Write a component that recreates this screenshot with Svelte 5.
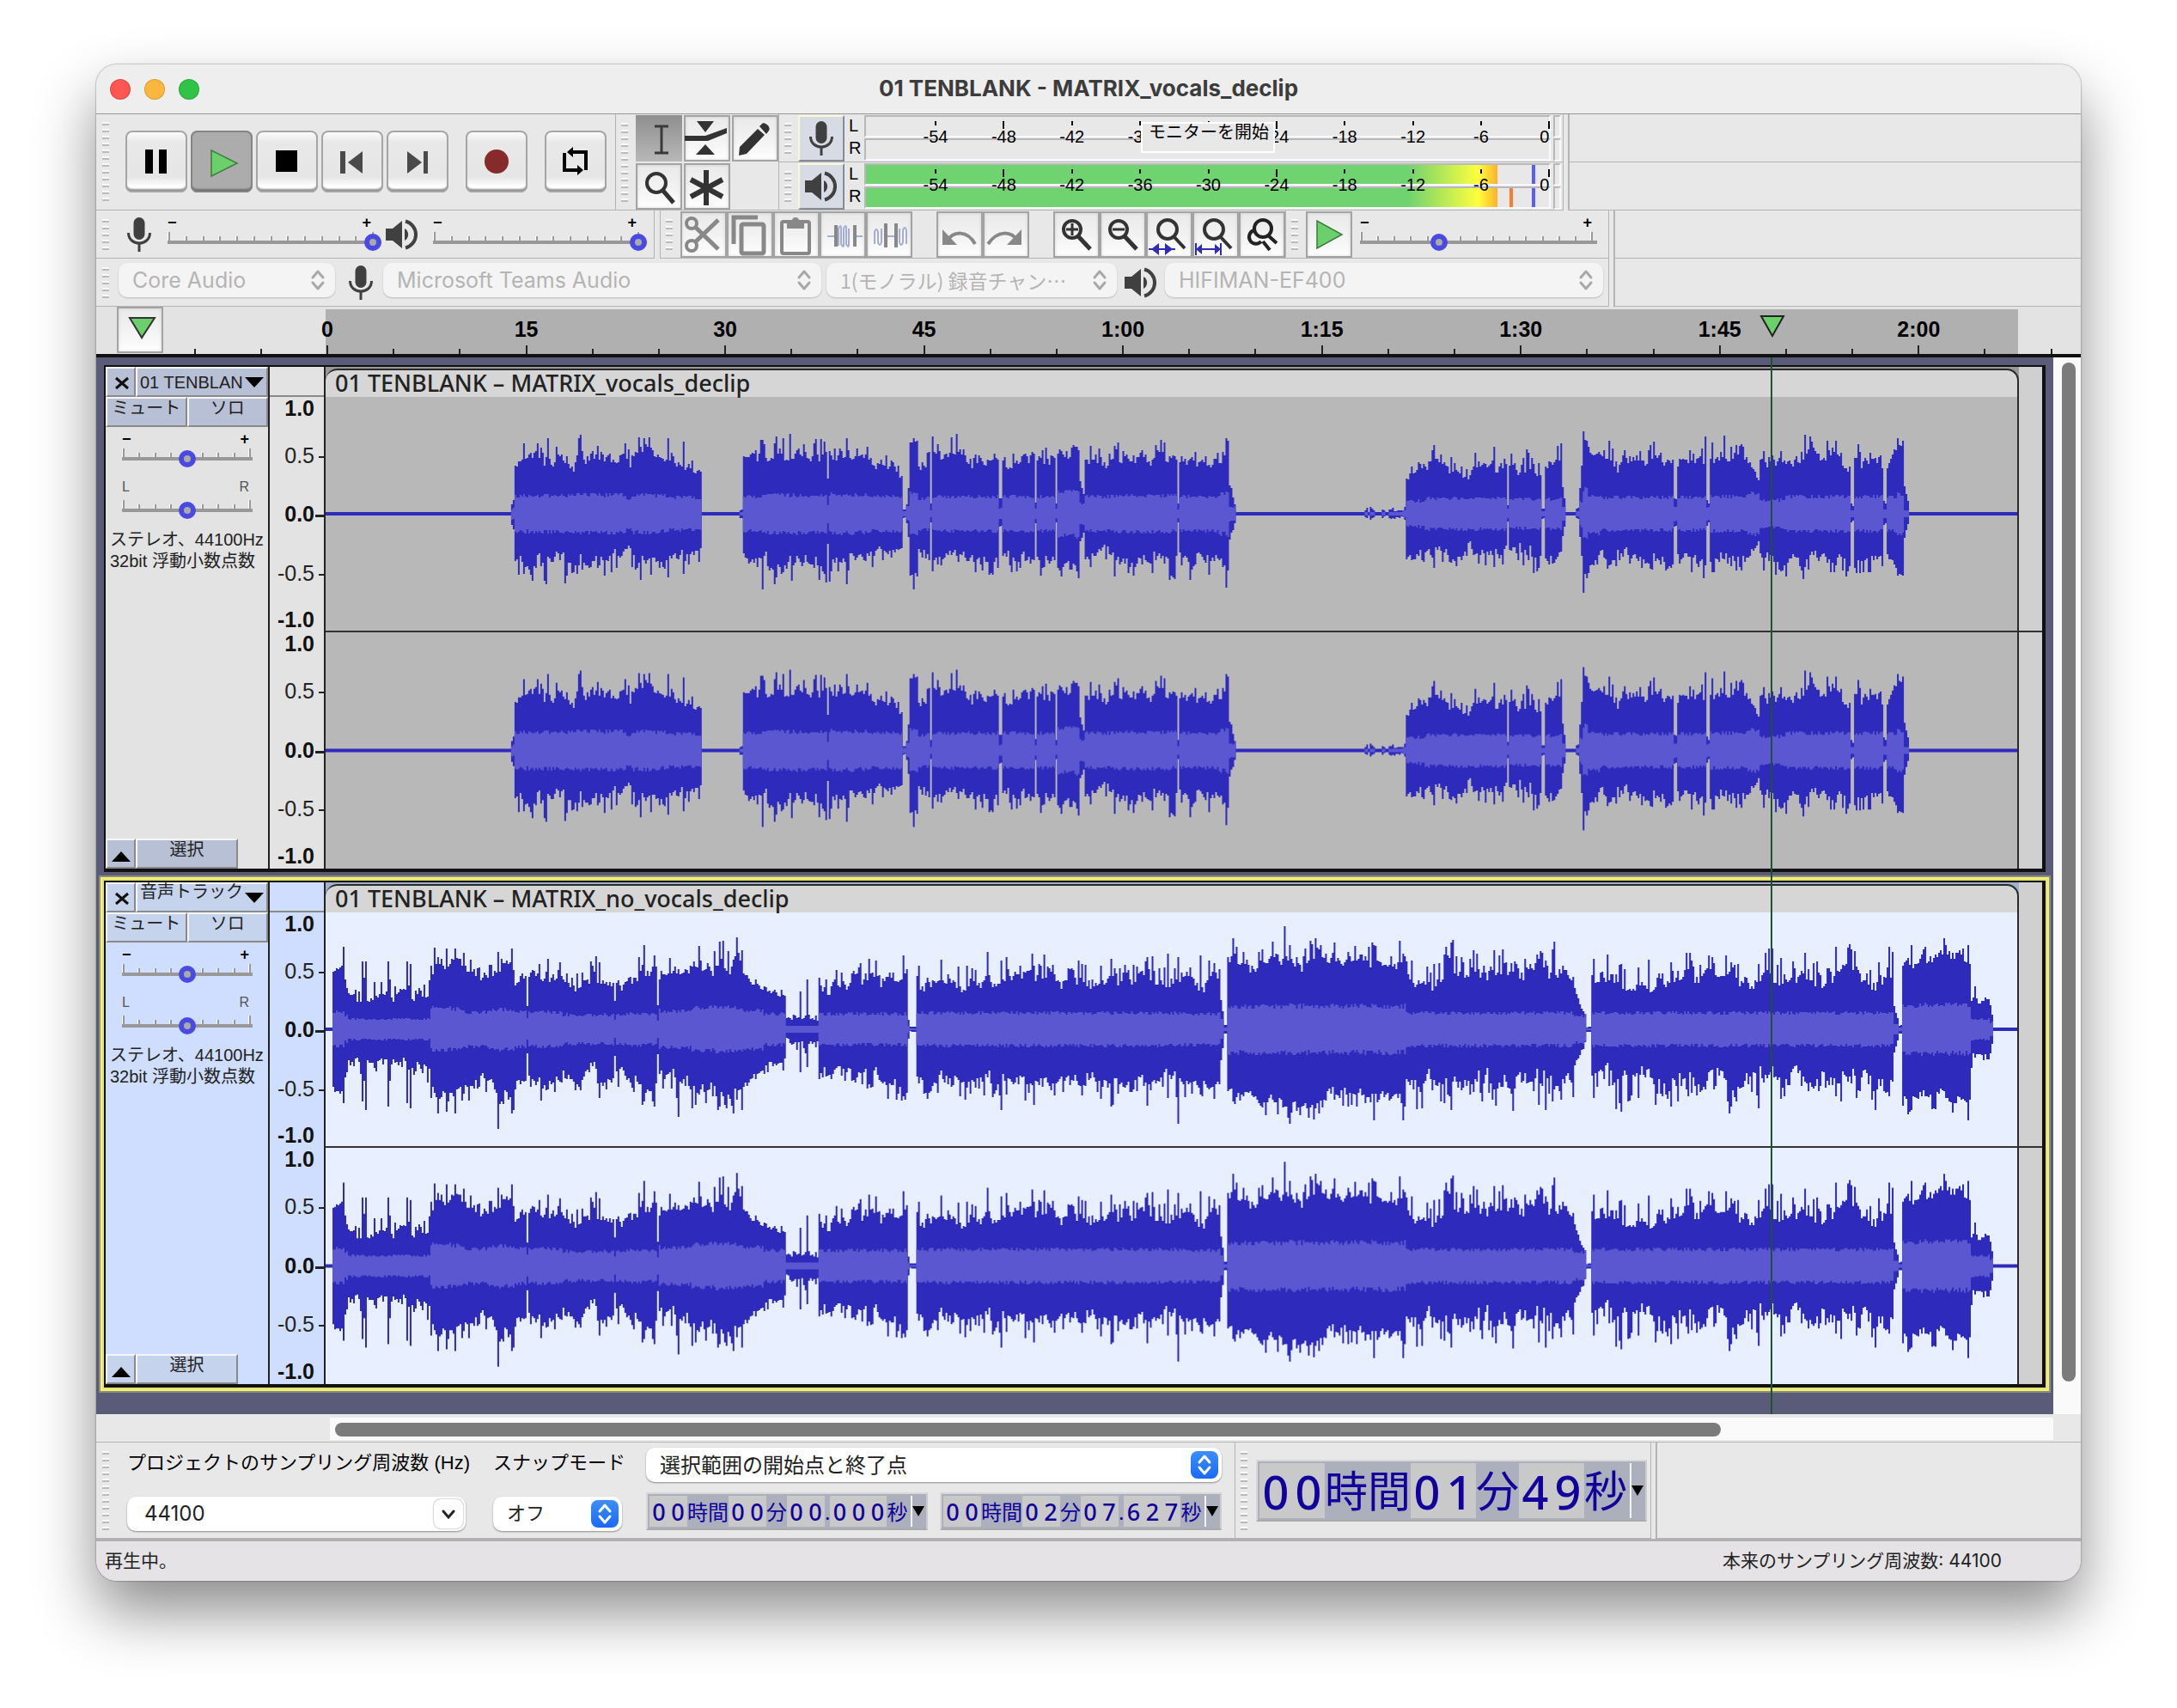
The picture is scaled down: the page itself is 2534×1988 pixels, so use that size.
<script lang="ts">
	type Segment = [from: number, to: number, start: number, end: number, jitter: number, rms: number];
	type Spike = [x: number, up: number, down: number];

	const DURATION = 127.627;
	const CLIP_WIDTH = 1970;
	const HALF = 136;
	const STEP = 2;

	const playhead = 108.9;

	const vocals: Segment[] = [
		[215, 219, 8, 20, 4, 6],
		[219, 240, 56, 68, 22, 21],
		[240, 290, 60, 62, 28, 21],
		[290, 350, 66, 62, 26, 22],
		[350, 356, 56, 48, 20, 18],
		[356, 384, 64, 72, 22, 22],
		[384, 400, 70, 58, 20, 21],
		[400, 437, 58, 50, 18, 19],
		[481, 485, 4, 6, 1, 2],
		[485, 510, 60, 68, 22, 20],
		[510, 584, 66, 68, 28, 22],
		[584, 586, 40, 32, 4, 10],
		[586, 630, 68, 62, 22, 22],
		[630, 671, 60, 46, 18, 20],
		[671, 676, 6, 4, 1, 3],
		[676, 679, 12, 40, 4, 8],
		[679, 690, 84, 82, 6, 26],
		[690, 703, 44, 58, 18, 18],
		[703, 706, 12, 10, 1, 4],
		[706, 784, 60, 64, 24, 20],
		[784, 788, 18, 16, 1, 6],
		[788, 825, 60, 64, 22, 20],
		[825, 827, 14, 12, 1, 6],
		[827, 849, 62, 66, 20, 20],
		[849, 851, 12, 12, 1, 6],
		[851, 877, 68, 72, 16, 26],
		[877, 883, 40, 20, 4, 12],
		[883, 915, 60, 54, 22, 20],
		[915, 991, 60, 64, 26, 21],
		[991, 993, 12, 12, 1, 5],
		[993, 1040, 60, 60, 24, 20],
		[1040, 1052, 60, 76, 14, 24],
		[1052, 1060, 34, 4, 4, 8],
		[1209, 1213, 3, 7, 2, 2],
		[1216, 1221, 7, 3, 2, 2],
		[1229, 1234, 5, 3, 1, 2],
		[1238, 1254, 5, 3, 3, 2],
		[1254, 1258, 4, 12, 1, 4],
		[1258, 1280, 46, 54, 18, 15],
		[1280, 1375, 52, 52, 24, 18],
		[1375, 1377, 10, 10, 1, 5],
		[1377, 1416, 52, 52, 24, 17],
		[1416, 1420, 6, 6, 1, 3],
		[1420, 1439, 58, 52, 20, 17],
		[1439, 1444, 32, 8, 3, 8],
		[1456, 1460, 6, 8, 1, 3],
		[1460, 1463, 30, 70, 6, 14],
		[1463, 1470, 88, 84, 8, 28],
		[1470, 1484, 74, 60, 10, 22],
		[1484, 1570, 56, 64, 24, 19],
		[1570, 1573, 18, 16, 1, 8],
		[1573, 1608, 56, 66, 20, 19],
		[1608, 1611, 16, 10, 1, 8],
		[1611, 1655, 60, 62, 24, 20],
		[1655, 1669, 58, 34, 8, 24],
		[1669, 1700, 54, 60, 24, 16],
		[1700, 1776, 62, 60, 26, 20],
		[1776, 1779, 12, 8, 1, 4],
		[1779, 1813, 62, 52, 22, 20],
		[1813, 1818, 16, 10, 1, 5],
		[1818, 1830, 54, 76, 8, 20],
		[1830, 1838, 78, 82, 8, 24],
		[1838, 1844, 32, 3, 2, 4]
	];

	const vocalSpikes: Spike[] = [
		[230, 82, 70], [294, 88, 60], [366, 78, 77], [398, 88, 74], [416, 84, 70], [508, 86, 88],
		[532, 88, 68], [580, 84, 70], [606, 88, 82], [684, 88, 88], [1048, 88, 86],
		[1464, 96, 92], [1606, 90, 60], [1830, 88, 72]
	];

	const backing: Segment[] = [
		[7, 21, 68, 74, 8, 20],
		[21, 26, 60, 40, 8, 15],
		[26, 122, 36, 38, 18, 12],
		[122, 160, 68, 78, 24, 24],
		[160, 190, 66, 62, 24, 20],
		[190, 220, 64, 76, 24, 23],
		[220, 234, 54, 58, 18, 20],
		[234, 236, 26, 26, 2, 12],
		[236, 275, 58, 58, 26, 20],
		[275, 336, 48, 54, 26, 17],
		[336, 338, 30, 30, 4, 10],
		[338, 386, 52, 60, 28, 18],
		[386, 388, 26, 30, 4, 10],
		[388, 425, 54, 68, 22, 21],
		[425, 486, 66, 76, 28, 25],
		[486, 510, 60, 44, 10, 22],
		[510, 536, 44, 36, 12, 18],
		[536, 574, 12, 14, 12, 4],
		[574, 610, 52, 50, 24, 18],
		[610, 677, 52, 60, 26, 18],
		[677, 679, 14, 8, 1, 4],
		[679, 687, 2, 3, 1, 1],
		[687, 990, 56, 56, 30, 19],
		[990, 1041, 56, 56, 26, 18],
		[1041, 1045, 40, 16, 4, 12],
		[1045, 1049, 5, 5, 1, 2],
		[1049, 1075, 78, 80, 18, 27],
		[1075, 1258, 76, 78, 24, 27],
		[1258, 1454, 58, 60, 32, 19],
		[1454, 1467, 44, 12, 6, 16],
		[1467, 1474, 2, 3, 1, 1],
		[1474, 1640, 56, 56, 32, 19],
		[1640, 1826, 56, 58, 32, 19],
		[1826, 1831, 26, 10, 2, 6],
		[1831, 1836, 4, 5, 1, 2],
		[1836, 1916, 76, 82, 20, 28],
		[1916, 1938, 34, 34, 20, 12],
		[1938, 1941, 28, 10, 2, 8]
	];

	const backingSpikes: Spike[] = [
		[20, 96, 86], [42, 79, 84], [44, 60, 60], [46, 79, 94], [72, 79, 90], [74, 58, 60], [94, 79, 86], [98, 76, 92],
		[130, 84, 98], [140, 94, 96], [150, 94, 98], [200, 90, 116], [216, 94, 98], [258, 82, 70],
		[318, 78, 80], [370, 98, 84], [382, 86, 90], [410, 70, 102], [458, 102, 90], [484, 92, 94],
		[552, 44, 50], [560, 58, 44], [632, 82, 64], [672, 86, 78], [786, 80, 94], [824, 74, 88],
		[914, 82, 90], [980, 88, 80], [992, 84, 110], [1018, 86, 76], [1056, 106, 84], [1116, 120, 90],
		[1122, 98, 110], [1152, 106, 92], [1220, 98, 106], [1254, 88, 106], [1360, 92, 70], [1420, 80, 94],
		[1430, 102, 70], [1476, 82, 80], [1508, 76, 96], [1566, 78, 90], [1636, 78, 90], [1668, 76, 92],
		[1758, 96, 78], [1846, 98, 94], [1912, 98, 106]
	];

	function noise(seed: number) {
		let s = seed;
		return () => {
			s = (s * 1664525 + 1013904223) % 4294967296;
			return s / 4294967296;
		};
	}

	// Mirrored step outline, one step per sample column
	function outline(up: number[], down: number[]) {
		let d = `M0 ${HALF}`;
		up.forEach((v, i) => (d += `V${HALF - v}H${(i + 1) * STEP}`));
		for (let i = down.length - 1; i >= 0; i--) d += `V${HALF + down[i]}H${i * STEP}`;
		return d + 'Z';
	}

	function buildWave(segments: Segment[], spikes: Spike[], lower: number, seed: number) {
		const rand = noise(seed);
		const up: number[] = [];
		const down: number[] = [];
		const rmsUp: number[] = [];
		const rmsDown: number[] = [];
		let driftUp = 0;
		let driftDown = 0;

		for (let x = 0; x < CLIP_WIDTH; x += STEP) {
			const seg = segments.find((s) => x >= s[0] && x < s[1]);
			if (!seg) {
				up.push(2);
				down.push(2);
				rmsUp.push(0);
				rmsDown.push(0);
				continue;
			}
			const [from, to, start, end, jitter, rms] = seg;
			const base = start + ((end - start) * (x - from)) / (to - from);
			driftUp = driftUp * 0.7 + (rand() - 0.5) * 0.7;
			driftDown = driftDown * 0.7 + (rand() - 0.5) * 0.7;
			const u = base + jitter * (driftUp * 0.8 + rand() ** 4);
			const l = base * lower + jitter * (driftDown * 0.8 + rand() ** 4);
			up.push(Math.round(Math.max(u, 2)));
			down.push(Math.round(Math.max(l, 2)));
			rmsUp.push(Math.round(rms * (0.88 + rand() * 0.24)));
			rmsDown.push(Math.round(rms * (0.88 + rand() * 0.24)));
		}
		for (const [x, u, l] of spikes) {
			const i = Math.floor(x / STEP);
			up[i] = u;
			down[i] = l;
		}
		return { peak: outline(up, down), rms: outline(rmsUp, rmsDown) };
	}

	const tracks = [
		{
			menu: '01 TENBLAN',
			clip: '01 TENBLANK – MATRIX_vocals_declip',
			focused: false,
			wave: buildWave(vocals, vocalSpikes, 0.84, 7)
		},
		{
			menu: '音声トラック',
			clip: '01 TENBLANK – MATRIX_no_vocals_declip',
			focused: true,
			wave: buildWave(backing, backingSpikes, 1, 21)
		}
	];

	const amplitudes = [
		{ label: '1.0', top: 5, bold: true },
		{ label: '0.5', top: 25, bold: false },
		{ label: '0.0', top: 50, bold: true },
		{ label: '-0.5', top: 75, bold: false },
		{ label: '-1.0', top: 95, bold: true }
	];

	const seconds = Array.from({ length: 29 }, (_, i) => (i - 2) * 5);
	const pct = (t: number) => `${(t / DURATION) * 100}%`;

	function timeLabel(t: number) {
		if (t < 60) return `${t}`;
		return `${Math.floor(t / 60)}:${String(t % 60).padStart(2, '0')}`;
	}

	const decibels = [-54, -48, -42, -36, -30, -24, -18, -12, -6, 0];
	const dbLeft = (db: number) => `${((60.2 + db) / 60.4) * 100}%`;

	const selectionStart = ['00', '時間', '00', '分', '00', '.', '000', '秒'];
	const selectionEnd = ['00', '時間', '02', '分', '07', '.', '627', '秒'];
	const clock = ['00', '時間', '01', '分', '49', '秒'];
</script>

{#snippet grip()}
	<span class="grip"></span>
{/snippet}

{#snippet mic()}
	<svg class="mic" viewBox="0 0 28 40" aria-hidden="true">
		<rect x="7.500" y="0" width="13" height="26" rx="6.500" fill="#404040" />
		<path d="M1.500 18c0 16 25 16 25 0M14 30v10" fill="none" stroke="#404040" stroke-width="3" />
	</svg>
{/snippet}

{#snippet speaker()}
	<svg class="speaker" viewBox="0 0 38 36" aria-hidden="true">
		<path d="M0 11h8L19 2v32L8 25H0z" fill="#404040" />
		<path d="M22 11a8 8 0 0 1 0 14z" fill="#404040" />
		<path d="M23 2.500a16 16 0 0 1 0 31" fill="none" stroke="#404040" stroke-width="4" />
	</svg>
{/snippet}

{#snippet slider(name: string, low: string, high: string, value: number, ticks: number)}
	<label class="slider">
		<span class="ends"><span>{low}</span><span>{high}</span></span>
		<span class="ticks">
			{#each Array(ticks) as _}<i></i>{/each}
		</span>
		<input type="range" min="0" max="100" {value} aria-label={name} />
	</label>
{/snippet}

{#snippet lens()}
	<circle cx="22" cy="21" r="10" fill="none" stroke="#333" stroke-width="4" />
	<path d="M29 29l14 15" stroke="#333" stroke-width="5" />
{/snippet}

{#snippet updown()}
	<svg class="updown" viewBox="0 0 32 32" aria-hidden="true">
		<path d="M10 13l6-7 6 7M10 19l6 7 6-7" fill="none" stroke="currentColor" stroke-width="3" stroke-linecap="round" stroke-linejoin="round" />
	</svg>
{/snippet}

{#snippet device(name: string, value: string, size: string)}
	<span class="select device {size}">
		<select aria-label={name} disabled><option>{value}</option></select>
		{@render updown()}
	</span>
{/snippet}

{#snippet time(name: string, parts: string[], size: string)}
	<div class="time {size}" role="group" aria-label={name}>
		{#each parts as part}
			{#if /\d/.test(part)}
				<span class="digits">{#each part as digit}<b>{digit}</b>{/each}</span>
			{:else}
				<span class="unit">{part}</span>
			{/if}
		{/each}
		<button aria-label="{name} format"><svg viewBox="0 0 14 12"><path d="M0 0h14L7 12z" /></svg></button>
	</div>
{/snippet}

{#snippet meter(level: boolean)}
	<div class="meter">
		<div class="channel">
			{#if level}<span class="fill"></span><span class="peak"></span>{/if}
		</div>
		<div class="channel">
			{#if level}<span class="fill"></span><span class="recent"></span><span class="peak"></span>{/if}
		</div>
		<div class="scale">
			{#each decibels as db}
				<span class:major={db % 24 === 0} class:edge={db === 0} style:left={dbLeft(db)}><em>{db}</em></span>
			{/each}
		</div>
	</div>
	<div class="clipping"><i></i><i></i></div>
{/snippet}

<div class="desktop">
	<main class="window">
		<header class="titlebar">
			<div class="lights">
				<button class="red" aria-label="Close"></button>
				<button class="amber" aria-label="Minimise"></button>
				<button class="green" aria-label="Zoom"></button>
			</div>
			<h1>01 TENBLANK - MATRIX_vocals_declip</h1>
		</header>

		<div class="dock tall">
			<section class="bar transport">
				{@render grip()}
				<button aria-label="Pause"><svg viewBox="0 0 72 72"><path d="M23 22h9v28h-9zM39 22h9v28h-9z" /></svg></button>
				<button class="pressed" aria-label="Play">
					<svg viewBox="0 0 72 72"><path d="M24 23v30l30-15z" fill="#6bd06b" stroke="#3d7a3d" stroke-width="1.500" /></svg>
				</button>
				<button aria-label="Stop"><svg viewBox="0 0 72 72"><path d="M23 23h25v25H23z" /></svg></button>
				<button aria-label="Skip to start">
					<svg viewBox="0 0 72 72"><path d="M22 24h6v26h-6zM48 24v26L31 37z" fill="#4a4a4a" /></svg>
				</button>
				<button aria-label="Skip to end">
					<svg viewBox="0 0 72 72"><path d="M43 24h5v26h-5zM24 24v26l17-13z" fill="#4a4a4a" /></svg>
				</button>
				<button class="apart" aria-label="Record"><svg viewBox="0 0 72 72"><circle cx="36" cy="36" r="14" fill="#872a2c" /></svg></button>
				<button class="apart" aria-label="Loop">
					<svg viewBox="0 0 72 72">
						<path d="M31 25h17v21M41 46H23V26" fill="none" stroke="#000" stroke-width="4" />
						<path d="M33 19v12l-7-6zM38 40v12l7-6z" />
					</svg>
				</button>
			</section>

			<section class="bar tools">
				{@render grip()}
				<div class="tool-grid">
					<button class="tile pressed" aria-label="Selection tool">
						<svg viewBox="0 0 54 54"><path d="M22 13h16M22 44h16M30 13v31" stroke="#3a3a3a" stroke-width="3" fill="none" /></svg>
					</button>
					<button class="tile" aria-label="Envelope tool">
						<svg viewBox="0 0 54 54" fill="#333">
							<path d="M15 7h20L25 20zM14 46h22L25 34zM1 24h24l25-9v6L28 30H1z" />
						</svg>
					</button>
					<button class="tile" aria-label="Draw tool">
						<svg viewBox="0 0 54 54" fill="#333">
							<path d="M9 37l21-21 8 7-21 22-9 2zM32 13l3-3c3-3 11 4 8 8l-3 4z" />
						</svg>
					</button>
					<button class="tile" aria-label="Zoom tool">
						<svg viewBox="0 0 54 54">
							<circle cx="24" cy="23" r="11" fill="none" stroke="#333" stroke-width="4" />
							<path d="M31 31l13 15" stroke="#333" stroke-width="5" />
						</svg>
					</button>
					<button class="tile" aria-label="Multi-tool">
						<svg viewBox="0 0 54 54"><path d="M26 8v41M8 19l37 20M45 19L8 39" stroke="#333" stroke-width="6" /></svg>
					</button>
				</div>
			</section>

			<div class="meters">
				<section class="bar meter-bar">
					{@render grip()}
					<button class="meter-button" aria-label="Recording meter">{@render mic()}</button>
					<div class="sides"><span>L</span><span>R</span></div>
					{@render meter(false)}
					<div class="tooltip" role="tooltip">モニターを開始</div>
				</section>
				<section class="bar meter-bar">
					{@render grip()}
					<button class="meter-button" aria-label="Playback meter">{@render speaker()}</button>
					<div class="sides"><span>L</span><span>R</span></div>
					{@render meter(true)}
				</section>
			</div>
			<div class="rest split"><i></i><i></i></div>
		</div>

		<div class="dock">
			<section class="bar mixer">
				{@render grip()}
				{@render mic()}
				{@render slider('Recording volume', '−', '+', 100, 13)}
				{@render speaker()}
				{@render slider('Playback volume', '−', '+', 100, 13)}
			</section>
			<section class="bar edit">
				{@render grip()}
				<div class="group">
					<button class="tile" aria-label="Cut">
						<svg viewBox="0 0 54 54" fill="none" stroke="#888" stroke-width="4">
							<circle cx="13" cy="14" r="6" /><circle cx="13" cy="40" r="6" />
							<path d="M17 18l27 26M17 36L44 10" stroke-width="5" />
						</svg>
					</button>
					<button class="tile" aria-label="Copy">
						<svg viewBox="0 0 54 54" fill="none" stroke="#888" stroke-width="5">
							<rect x="17" y="15" width="26" height="34" rx="2" /><path d="M8 38V7h28" />
						</svg>
					</button>
					<button class="tile" aria-label="Paste">
						<svg viewBox="0 0 54 54">
							<rect x="10" y="12" width="32" height="37" rx="2" fill="none" stroke="#888" stroke-width="4" />
							<path d="M16 20v-9h6a4 4 0 0 1 8 0h6v9z" fill="#888" />
						</svg>
					</button>
					<button class="tile" aria-label="Trim outside selection">
						<svg viewBox="0 0 54 54" fill="none">
							<path d="M9 29h9M40 29h10M22 40V20q3-6 3 0v18q3 6 3 0V20q3-6 3 0v18q3 6 3 0V20" stroke="#a4aed4" stroke-width="2" />
							<path d="M19 16v25M41 16v25" stroke="#888" stroke-width="4" />
						</svg>
					</button>
					<button class="tile" aria-label="Silence selection">
						<svg viewBox="0 0 54 54" fill="none">
							<path d="M10 38V24q2-6 4 0v12q2 6 4 0V20M25 29h9M39 20v16q2 6 4 0V22q2-6 4 0v16" stroke="#a4aed4" stroke-width="2" />
							<path d="M23 14v28M35 14v28" stroke="#888" stroke-width="4" />
						</svg>
					</button>
				</div>
				<div class="group">
					<button class="tile" aria-label="Undo">
						<svg viewBox="0 0 54 54"><path d="M12 35c8-13 24-13 33 3" fill="none" stroke="#888" stroke-width="4" /><path d="M7 21v18h17z" fill="#888" /></svg>
					</button>
					<button class="tile" aria-label="Redo">
						<svg viewBox="0 0 54 54"><path d="M41 35c-8-13-24-13-35 3" fill="none" stroke="#888" stroke-width="4" /><path d="M45 21v18H28z" fill="#888" /></svg>
					</button>
				</div>
				<div class="group">
					<button class="tile" aria-label="Zoom in"><svg viewBox="0 0 54 54">{@render lens()}<path d="M15 21h14M22 14v14" stroke="#333" stroke-width="3" /></svg></button>
					<button class="tile" aria-label="Zoom out"><svg viewBox="0 0 54 54">{@render lens()}<path d="M15 21h14" stroke="#333" stroke-width="3" /></svg></button>
					<button class="tile" aria-label="Fit selection">
						<svg viewBox="0 0 54 54">
							<circle cx="25" cy="21" r="11" fill="none" stroke="#333" stroke-width="4" />
							<path d="M32 29l13 14" stroke="#333" stroke-width="4" />
							<path d="M3 44h31" stroke="#302cb8" stroke-width="2" />
							<path d="M15 37v14l-9-7zM22 37v14l9-7z" fill="#302cb8" />
						</svg>
					</button>
					<button class="tile" aria-label="Fit project">
						<svg viewBox="0 0 54 54">
							<circle cx="25" cy="21" r="11" fill="none" stroke="#333" stroke-width="4" />
							<path d="M32 29l13 14" stroke="#333" stroke-width="4" />
							<path d="M4 37v14M33 37v14M4 44h29" stroke="#302cb8" stroke-width="2" />
							<path d="M4 44l7-6v12zM33 44l-7-6v12z" fill="#302cb8" />
						</svg>
					</button>
					<button class="tile" aria-label="Zoom toggle">
						<svg viewBox="0 0 54 54" fill="none" stroke="#222" stroke-width="4">
							<path d="M18 22a8 8 0 1 0 8 13M28 35l8 10M34 28l10 9" />
							<circle cx="28" cy="20" r="10" />
						</svg>
					</button>
				</div>
			</section>
			<section class="bar speed">
				{@render grip()}
				<button class="tile" aria-label="Play at speed">
					<svg viewBox="0 0 54 54"><path d="M13 11v32l29-16z" fill="#6bd06b" stroke="#3d7a3d" stroke-width="1.500" /></svg>
				</button>
				{@render slider('Playback speed', '−', '+', 32, 15)}
			</section>
			<div class="rest"></div>
		</div>

		<div class="dock">
			<section class="bar devices">
				{@render grip()}
				{@render device('Audio host', 'Core Audio', 'host')}
				{@render mic()}
				{@render device('Recording device', 'Microsoft Teams Audio', 'long')}
				{@render device('Recording channels', '1(モノラル) 録音チャン…', 'channels')}
				{@render speaker()}
				{@render device('Playback device', 'HIFIMAN-EF400', 'long')}
			</section>
			<div class="rest"></div>
		</div>

		<div class="ruler">
			<div class="ruler-start">
				<button class="tile pin" aria-label="Pin play head">
					<svg viewBox="0 0 54 54"><path d="M15 13h29L29 36z" fill="#6bd06b" stroke="#333" stroke-width="2" /></svg>
				</button>
			</div>
			<div class="axis">
				{#each seconds as t}
					<span class="mark" class:long={t % 15 === 0} style:left={pct(t)}>
						{#if t >= 0 && t % 15 === 0}{timeLabel(t)}{/if}
					</span>
				{/each}
				<svg class="head" style:left={pct(playhead)} viewBox="0 0 30 28" aria-hidden="true">
					<path d="M2 2h26L15 25z" fill="#6bd06b" stroke="#222" stroke-width="2" />
				</svg>
			</div>
		</div>

		<div class="workspace">
			<div class="tracks">
				{#each tracks as track}
					<article class="track" class:focused={track.focused}>
						<aside class="panel">
							<div class="panel-row">
								<button class="close" aria-label="Close track">
									<svg viewBox="0 0 16 16"><path d="M1 2l14 12M15 2L1 14" stroke="#111" stroke-width="3" /></svg>
								</button>
								<button class="menu">
									<span>{track.menu}</span>
									<svg viewBox="0 0 22 12"><path d="M0 0h22L11 12z" /></svg>
								</button>
							</div>
							<div class="panel-row">
								<button class="half">ミュート</button>
								<button class="half">ソロ</button>
							</div>
							<div class="gain">{@render slider('Gain', '−', '+', 50, 9)}</div>
							<div class="pan">{@render slider('Pan', 'L', 'R', 50, 9)}</div>
							<p>ステレオ、44100Hz<br />32bit 浮動小数点数</p>
							<div class="panel-row foot">
								<button class="close" aria-label="Collapse">
									<svg viewBox="0 0 22 12"><path d="M0 12h22L11 0z" /></svg>
								</button>
								<button class="pick">選択</button>
							</div>
						</aside>
						<div class="vruler">
							<div class="vruler-top"></div>
							{#each [0, 1] as channel (channel)}
								<div class="vscale">
									{#each amplitudes as a}
										<span class:bold={a.bold} style:top="{a.top}%">{a.label}</span>
									{/each}
									<i class="quarter"></i><i class="zero"></i><i class="three"></i>
								</div>
							{/each}
						</div>
						<div class="clip">
							<div class="clip-head">{track.clip}</div>
							{#each [0, 1] as channel (channel)}
								<div class="wave">
									<svg viewBox="0 0 {CLIP_WIDTH} {HALF * 2}" preserveAspectRatio="none" aria-hidden="true">
										<path d={track.wave.peak} fill="#2e2abb" />
										<path d={track.wave.rms} fill="#5a57d0" />
									</svg>
								</div>
							{/each}
						</div>
						<div class="after"><i></i></div>
					</article>
				{/each}
				<div class="playline"><i style:left={pct(playhead)}></i></div>
			</div>
			<div class="vscroll"><i></i></div>
		</div>

		<div class="hscroll"><div><i></i></div></div>

		<div class="dock bottom">
			<section class="bar selection">
				{@render grip()}
				<div class="field rate">
					<label for="rate">プロジェクトのサンプリング周波数 (Hz)</label>
					<span class="combo">
						<input id="rate" value="44100" />
						<button aria-label="Sampling rates">
							<svg viewBox="0 0 34 34"><path d="M11 14l6 7 6-7" fill="none" stroke="#222" stroke-width="3" stroke-linecap="round" /></svg>
						</button>
					</span>
				</div>
				<div class="field snap">
					<label for="snap">スナップモード</label>
					<span class="select">
						<select id="snap"><option>オフ</option></select>
						{@render updown()}
					</span>
				</div>
				<div class="field range">
					<span class="select">
						<select aria-label="Selection mode"><option>選択範囲の開始点と終了点</option></select>
						{@render updown()}
					</span>
					<div class="times">
						{@render time('Selection start', selectionStart, 'small')}
						{@render time('Selection end', selectionEnd, 'small')}
					</div>
				</div>
			</section>
			<section class="bar clock">
				{@render grip()}
				{@render time('Audio position', clock, 'large')}
			</section>
			<div class="rest"></div>
		</div>

		<footer class="status">
			<span>再生中。</span>
			<span>本来のサンプリング周波数: 44100</span>
		</footer>
	</main>
</div>

<style>
	:global(body) {
		margin: 0;
		background: #fff;
	}

	.desktop {
		padding: 75px 112px 148px;
		font-family: 'Liberation Sans', 'Noto Sans CJK JP', sans-serif;
		color: #000;
	}

	.window {
		display: flex;
		flex-direction: column;
		overflow: hidden;
		border-radius: 24px;
		background: #e8e8e8;
		box-shadow:
			0 0 2px rgba(0, 0, 0, 0.6),
			0 36px 70px rgba(0, 0, 0, 0.45);
	}

	button,
	input,
	select {
		margin: 0;
		padding: 0;
		border: 0;
		font: inherit;
		color: inherit;
		background: none;
		box-sizing: border-box;
	}

	svg {
		display: block;
		flex: none;
	}

	/* Title bar */
	.titlebar {
		display: grid;
		grid-template-columns: 1fr auto 1fr;
		align-items: center;
		height: 57px;
		background: #eee;
		border-bottom: 1px solid #979797;
	}

	.lights {
		display: flex;
		gap: 16px;
		padding-left: 16px;
	}

	.lights button {
		width: 24px;
		height: 24px;
		border-radius: 50%;
		border: 1px solid rgba(0, 0, 0, 0.15);
	}

	.red {
		background: #fe5650;
	}

	.amber {
		background: #fdb63d;
	}

	.green {
		background: #2fc446;
	}

	h1 {
		margin: 0;
		padding-bottom: 2px;
		font: 700 26px/32px Inter, sans-serif;
		color: #3c3c3c;
	}

	/* Docked toolbars */
	.dock {
		display: flex;
		height: 56px;
	}

	.tall,
	.bottom {
		height: 112px;
	}

	.bar {
		display: flex;
		align-items: center;
		box-sizing: border-box;
		padding-left: 6px;
		border-right: 1px solid #b4b4b4;
		border-bottom: 1px solid #b4b4b4;
	}

	.dock > .bar:first-child {
		padding-left: 7px;
	}

	.rest {
		flex: 1;
		box-sizing: border-box;
		margin-left: 5px;
		border-left: 2px solid #b4b4b4;
		border-bottom: 1px solid #b4b4b4;
	}

	.split {
		display: grid;
		grid-template-rows: 1fr 1fr;
	}

	.split i:first-child {
		border-bottom: 1px solid #b4b4b4;
	}

	.grip {
		flex: none;
		width: 8px;
		height: 36px;
		background: repeating-linear-gradient(#f8f8ff 0 2px, #bbb 2px 4px, transparent 4px 8px);
	}

	.tall > .bar .grip,
	.bottom .grip {
		height: 92px;
	}

	.mic {
		width: 28px;
		height: 40px;
	}

	.speaker {
		width: 38px;
		height: 36px;
	}

	.transport {
		gap: 4px;
		padding-right: 10px;
		padding-bottom: 2px;
	}

	.transport .grip {
		margin-right: 15px;
	}

	.transport button {
		width: 72px;
		height: 72px;
		border-radius: 8px;
		background: linear-gradient(#fff, #e9e9e9 18%, #e6e6e6 75%, #fff 90%);
		box-shadow:
			inset 0 0 0 2px #a5a5a5,
			inset 0 -4px 2px #8e8e8e;
	}

	.transport .pressed {
		background: #acacac;
		box-shadow:
			inset 0 0 0 2px #858585,
			inset 0 -4px 2px #6e6e6e;
	}

	.transport .apart {
		margin-left: 16px;
	}

	.tool-grid {
		display: grid;
		grid-template-columns: repeat(3, 54px);
		gap: 2px;
		margin-left: 9px;
	}

	.tile {
		flex: none;
		width: 54px;
		height: 54px;
		background: linear-gradient(#e9e9e9, #f2f2f2 50%, #fff);
		box-shadow:
			inset 0 0 0 2px #a3a3a3,
			inset 0 0 5px #aaa;
	}

	.tile.pressed {
		background: linear-gradient(#8f8f8f, #b8b8b8);
		box-shadow: none;
	}

	/* Level meters */
	.meter-bar {
		position: relative;
		height: 56px;
	}

	.meters .meter-bar .grip {
		height: 36px;
	}

	.meter-button {
		display: flex;
		align-items: center;
		justify-content: center;
		width: 54px;
		height: 54px;
		margin-left: 8px;
		background: #d7dbe3;
		border: 2px solid;
		border-color: #f8f8d8 #868b98 #868b98 #f8f8d8;
	}

	.sides {
		display: flex;
		flex-direction: column;
		width: 18px;
		margin-left: 5px;
		padding-bottom: 4px;
		font-size: 20px;
		line-height: 26px;
	}

	.meter {
		position: relative;
		display: grid;
		grid-template-rows: 1fr 1fr;
		gap: 1px;
		width: 799px;
		height: 54px;
	}

	.channel {
		position: relative;
		border: 2px solid;
		border-color: #b8b8b8 #f8f8ff #f8f8ff #b8b8b8;
	}

	.channel span {
		position: absolute;
		top: 0;
		bottom: 0;
		width: 4px;
	}

	.channel .fill {
		left: 0;
		width: 92.5%;
		background: linear-gradient(90deg, #6fd46f 86%, #ffff3c 97%, #ffb02e);
	}

	.channel .peak {
		left: 97.5%;
		background: #5b5bff;
	}

	.channel .recent {
		left: 94.2%;
		background: #f97b2b;
	}

	.scale span {
		position: absolute;
		top: 7px;
		width: 2px;
		height: 5px;
		background: #000;
	}

	.scale .major {
		height: 9px;
	}

	.scale em {
		position: absolute;
		top: 7px;
		left: 1px;
		font-size: 20px;
		font-style: normal;
		line-height: 22px;
		transform: translateX(-50%);
	}

	.scale .edge em {
		transform: translateX(-100%);
	}

	.clipping {
		display: grid;
		gap: 1px;
		width: 9px;
		height: 54px;
		margin: 0 2px 0 3px;
	}

	.clipping i {
		border: 2px solid;
		border-color: #b8b8b8 #f8f8ff #f8f8ff #b8b8b8;
	}

	.tooltip {
		position: absolute;
		top: 9px;
		left: 421px;
		z-index: 2;
		box-sizing: border-box;
		height: 36px;
		padding: 0 5px 0 7px;
		border: 2px solid #fff;
		background: #e8e8e8;
		font-size: 20px;
		line-height: 21px;
		white-space: nowrap;
	}

	/* Sliders */
	.slider {
		position: relative;
		display: block;
		width: 249px;
		height: 40px;
		margin-bottom: 2px;
	}

	.ends,
	.ticks {
		display: flex;
		justify-content: space-between;
	}

	.ends {
		height: 18px;
		padding-right: 12px;
		font-size: 18px;
		font-weight: bold;
		line-height: 14px;
	}

	.ticks {
		align-items: flex-end;
		height: 10px;
		padding-right: 9px;
	}

	.ticks i {
		width: 2px;
		height: 5px;
		border-left: 1px solid #fff;
		background: #999;
	}

	.ticks i:first-child,
	.ticks i:last-child {
		height: 10px;
	}

	.slider input {
		position: absolute;
		left: 0;
		bottom: 0;
		width: 100%;
		height: 20px;
		appearance: none;
	}

	.slider input::-webkit-slider-runnable-track {
		height: 4px;
		background: #989898;
	}

	.slider input::-webkit-slider-thumb {
		appearance: none;
		width: 20px;
		height: 20px;
		margin-top: -8px;
		border: 6px solid #4a4ae2;
		border-radius: 50%;
		background: #aaa;
	}

	.mixer {
		padding-right: 8px;
	}

	.mixer .mic {
		margin: 0 19px 0 21px;
	}

	.mixer .speaker {
		margin: 0 17px 0 5px;
	}

	.edit {
		margin-left: 6px;
		border-left: 1px solid #b4b4b4;
	}

	.group {
		display: flex;
		margin-left: 28px;
	}

	.edit .grip + .group {
		margin-left: 9px;
	}

	.speed {
		padding-right: 13px;
	}

	.speed .tile {
		margin: 0 9px;
	}

	.speed .slider {
		width: 276px;
	}

	.speed .ends {
		padding-right: 6px;
	}

	.speed .ticks {
		padding-right: 5px;
	}

	/* Drop-downs */
	.select {
		position: relative;
		display: block;
		font-size: 24px;
	}

	.select select {
		display: block;
		width: 100%;
		height: 40px;
		padding-left: 16px;
		border-radius: 10px;
		appearance: none;
		background: #fff;
		color: #222;
		box-shadow: 0 1px 2px rgba(0, 0, 0, 0.4);
	}

	.updown {
		position: absolute;
		top: 4px;
		right: 4px;
		width: 32px;
		height: 32px;
		border-radius: 8px;
		background: linear-gradient(#3d8df9, #1a6bf5);
		color: #fff;
		pointer-events: none;
	}

	.device {
		margin-bottom: 6px;
		font: 25px Inter, 'Noto Sans CJK JP', sans-serif;
	}

	.device select {
		background: #f4f4f4;
		color: #b4b4b4;
		opacity: 1;
		box-shadow: 0 1px 2px rgba(0, 0, 0, 0.2);
	}

	.device .updown {
		background: none;
		color: #a8a8a8;
	}

	.host {
		width: 252px;
		margin-left: 11px;
	}

	.devices .mic {
		margin: 0 12px 0 16px;
	}

	.devices .speaker {
		margin: 0 9px;
	}

	.devices {
		padding-right: 6px;
	}

	.long {
		width: 510px;
	}

	.channels {
		width: 338px;
		margin-left: 6px;
		font: 23px 'Noto Sans CJK JP', sans-serif;
	}

	/* Timeline */
	.ruler {
		display: flex;
		height: 55px;
		padding-right: 73px;
		border-bottom: 4px solid #111;
		background: #e3e3e3;
	}

	.ruler-start {
		width: 267px;
	}

	.pin {
		display: block;
		position: relative;
		z-index: 1;
		margin-left: 24px;
	}

	.axis {
		position: relative;
		flex: 1;
		margin-top: 3px;
		background: #b0b0b0;
	}

	.mark {
		position: absolute;
		bottom: 6px;
		display: flex;
		justify-content: center;
		width: 2px;
		height: 38px;
		margin-left: 1px;
		font-size: 25px;
		font-weight: bold;
		line-height: 30px;
		white-space: nowrap;
	}

	.mark::after {
		content: '';
		position: absolute;
		bottom: -6px;
		left: 0;
		width: 2px;
		height: 6px;
		background: #222;
	}

	.mark.long::after {
		height: 10px;
	}

	.head {
		position: absolute;
		top: 6px;
		width: 30px;
		height: 28px;
		margin-left: -12px;
	}

	/* Tracks */
	.workspace {
		display: flex;
		background: #5a5b78;
	}

	.tracks {
		position: relative;
		flex: 1;
		display: flex;
		flex-direction: column;
		gap: 10px;
		padding: 9px 9px 31px;
	}

	.track {
		--face: #e3e3e3;
		--button: #b7c0d4;
		--wave: #b8b8b8;
		display: flex;
		border: solid #111;
		border-width: 2px 4px 4px 2px;
		background: #999;
	}

	.track.focused {
		--face: #cfdeff;
		--button: #c5d3ec;
		--wave: #e8effe;
		background: #9fb0cf;
		box-shadow:
			0 0 0 2px #e4e46c,
			0 0 0 4px #f1f17c,
			0 0 0 6px #8f8f78;
	}

	.panel {
		display: flex;
		flex-direction: column;
		width: 189px;
		border-right: 2px solid #222;
		background: var(--face);
	}

	.panel-row {
		display: flex;
		height: 35px;
	}

	.panel-row button {
		box-sizing: border-box;
		border: 2px solid;
		border-color: #f6f6f6 #8a8a8a #8a8a8a #f6f6f6;
		background: var(--button);
		color: #222;
		font-size: 20px;
		line-height: 20px;
	}

	.close {
		display: flex;
		align-items: center;
		justify-content: center;
		width: 35px;
	}

	.close svg {
		width: 18px;
		height: 16px;
		margin: 2px 0 0 3px;
	}

	.foot .close svg {
		width: 22px;
		height: 12px;
		margin: 6px 0 0;
	}

	.panel-row .menu {
		flex: 1;
		display: flex;
		align-items: center;
		gap: 2px;
		padding: 0 3px;
		white-space: nowrap;
	}

	.menu span {
		flex: 1;
		text-align: left;
	}

	.focused .menu span {
		padding-bottom: 14px;
	}

	.menu svg {
		width: 22px;
		height: 12px;
	}

	.half {
		flex: 1;
		padding-bottom: 10px;
	}

	.gain,
	.pan {
		padding: 0 19px;
	}

	.gain {
		padding-top: 7px;
	}

	.pan {
		padding-top: 14px;
	}

	.panel .slider {
		width: 152px;
	}

	.pan .slider {
		height: 44px;
	}

	.panel .ends {
		padding-right: 4px;
	}

	.panel .ticks {
		padding-right: 2px;
	}

	.pan .ends {
		height: 22px;
		font-size: 16px;
		font-weight: normal;
		color: #555;
	}

	.panel p {
		flex: 1;
		margin: 10px 0 0 5px;
		font-size: 20px;
		line-height: 25px;
		color: #222;
		white-space: nowrap;
	}

	.pick {
		width: 119px;
		padding-bottom: 10px;
	}

	.vruler {
		display: flex;
		flex-direction: column;
		width: 63px;
		border-right: 2px solid #222;
		background: var(--face);
	}

	.vruler-top {
		height: 33px;
		border-bottom: 2px solid #8a8a8a;
	}

	.vscale {
		position: relative;
		height: 274px;
	}

	.vscale + .vscale {
		height: 275px;
	}

	.vscale span {
		position: absolute;
		right: 11px;
		margin-top: -15px;
		font-size: 25px;
		line-height: 28px;
		color: #222;
	}

	.vscale .bold {
		font-weight: bold;
		color: #111;
	}

	.vscale i {
		position: absolute;
		right: 0;
		width: 6px;
		height: 2px;
		background: #222;
	}

	.quarter {
		top: 25%;
	}

	.vscale .zero {
		top: 50%;
		width: 10px;
		height: 3px;
	}

	.three {
		top: 75%;
	}

	.clip {
		flex: 1;
		min-width: 0;
		padding-top: 2px;
	}

	.clip-head {
		box-sizing: border-box;
		height: 33px;
		padding-left: 11px;
		border: solid #2a2a2a;
		border-width: 2px 2px 0 0;
		border-radius: 14px 14px 0 0;
		background: #d6d6d6;
		font: 500 27px/30px 'Noto Sans', sans-serif;
		color: #222;
	}

	.wave {
		height: 272px;
		border-right: 2px solid #2a2a2a;
		border-bottom: 2px solid #333;
		background: var(--wave);
	}

	.wave:last-child {
		height: 275px;
		border-bottom: 0;
	}

	.wave svg {
		width: 100%;
		height: 100%;
	}

	.after {
		width: 27px;
		background: #d0d0d0;
	}

	.after i {
		display: block;
		height: 307px;
		border-bottom: 2px solid #333;
	}

	.playline {
		position: absolute;
		inset: 0 40px 0 268px;
		pointer-events: none;
	}

	.playline i {
		position: absolute;
		top: 0;
		bottom: 0;
		width: 2px;
		background: #1f5230;
	}

	.vscroll {
		display: flex;
		width: 22px;
		padding: 6px 0 38px 10px;
		background: #fafafa;
	}

	.vscroll i {
		width: 16px;
		border-radius: 8px;
		background: #7b7b7b;
	}

	.hscroll {
		padding: 4px 32px 2px 272px;
		border-bottom: 1px solid #b4b4b4;
	}

	.hscroll div {
		padding: 6px 387px 4px 6px;
		background: #fafafa;
	}

	.hscroll i {
		display: block;
		height: 16px;
		border-radius: 8px;
		background: #7b7b7b;
	}

	/* Selection and time toolbars */
	.field {
		display: flex;
		flex-direction: column;
		gap: 17px;
		padding-bottom: 3px;
		font-size: 22px;
	}

	.field label {
		height: 40px;
		line-height: 35px;
		white-space: nowrap;
	}

	.rate {
		width: 394px;
		margin-left: 21px;
	}

	.snap {
		width: 150px;
		margin: 0 28px 0 32px;
	}

	.snap .select {
		font-size: 22px;
	}

	.range {
		gap: 12px;
		width: 670px;
	}

	.selection {
		padding-right: 15px;
	}

	.combo {
		display: flex;
		align-items: center;
		height: 40px;
		padding-right: 3px;
		border-radius: 10px;
		background: #fff;
		box-shadow: 0 1px 2px rgba(0, 0, 0, 0.4);
	}

	.combo input {
		flex: 1;
		min-width: 0;
		padding-left: 20px;
		font: 24px Inter, sans-serif;
		color: #222;
	}

	.combo button {
		flex: none;
		width: 34px;
		height: 34px;
		border-radius: 8px;
		box-shadow: 0 0 2px rgba(0, 0, 0, 0.5);
	}

	.times {
		display: flex;
		justify-content: space-between;
		height: 44px;
	}

	.time {
		display: flex;
		box-sizing: border-box;
		padding: 2px;
		border: 2px solid;
		border-color: #d8d8d8 #ccc #aaa #d8d8d8;
		background: #abb0bc;
		color: #11009c;
		font-family: 'Noto Sans', 'Noto Sans CJK JP', sans-serif;
	}

	.digits {
		display: flex;
		background: #c9c9c9;
	}

	.digits b {
		width: 22px;
		font-size: 27px;
		font-weight: 500;
		line-height: 42px;
		text-align: center;
	}

	.unit {
		font-size: 24px;
		line-height: 42px;
	}

	.time button {
		width: 16px;
		margin-left: auto;
		border-left: 2px solid #f4f4f8;
	}

	.time button svg {
		width: 14px;
		height: 12px;
	}

	.small {
		width: 328px;
		height: 44px;
	}

	.small .digits b,
	.small .unit {
		line-height: 38px;
	}

	.large {
		width: 455px;
		height: 72px;
		margin: 0 4px 0 10px;
	}

	.large .digits b {
		width: 38px;
		font-size: 54px;
		line-height: 66px;
	}

	.large .unit {
		font-size: 50px;
		line-height: 64px;
	}

	.status {
		display: flex;
		justify-content: space-between;
		height: 46px;
		padding: 0 92px 0 10px;
		border-top: 3px solid #b0b0b0;
		background: #e5e3e6;
		font: 21px/46px Inter, 'Noto Sans CJK JP', sans-serif;
		color: #222;
	}
</style>
